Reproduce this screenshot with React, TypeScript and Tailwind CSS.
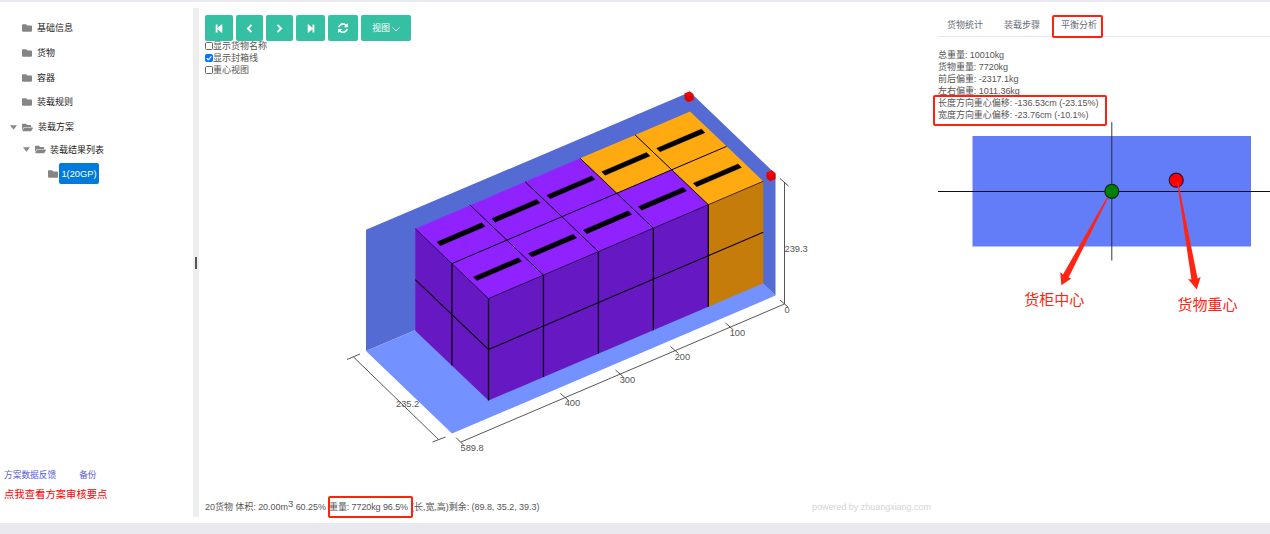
import React from "react";
import { FaFolder, FaFolderOpen } from "react-icons/fa";

type Point = [number, number];

const ORIGIN: Point = [415.3, 228.7];
const LENGTH: Point = [54.95, -23.45];
const WIDTH: Point = [36.6, 34.9];
const BOX_HEIGHT = 51;

const project = (l: number, w: number, down = 0): Point => [
  ORIGIN[0] + l * LENGTH[0] + w * WIDTH[0],
  ORIGIN[1] + l * LENGTH[1] + w * WIDTH[1] + down * BOX_HEIGHT,
];
const pts = (list: Point[]) => list.map((p) => p.join(",")).join(" ");

function Edge({ a, b, w = 1 }: { a: Point; b: Point; w?: number }) {
  return <line x1={a[0]} y1={a[1]} x2={b[0]} y2={b[1]} stroke="#0a0010" strokeWidth={w} />;
}

function Marker({ x, y }: { x: number; y: number }) {
  return (
    <g transform={`translate(${x} ${y})`}>
      <path d="M-4.5-3.5 1-5.5 4.5-2.5V3L-1 5.2-4.5 2Z" fill="#e00000" />
      <path d="M-4.5-3.5 1-5.5 4.5-2.5-1-.3Z" fill="#ff0000" />
    </g>
  );
}

function Scene() {
  const cells = [0, 1].flatMap((w) => [0, 1, 2, 3, 4].map((l) => ({ l, w })));
  return (
    <svg viewBox="205 78 722 416" className="block h-[416px] w-[722px]" fontFamily="Liberation Sans, Arial, sans-serif" fontSize="9.3" fill="#555">
      <polygon points="366,229.8 690,92 775.5,174 775.5,295.5 690,214 366,351" fill="#546bd3" />
      <polygon points="366,351 690,213.5 775.5,295.5 452,433.6" fill="#7391ff" />
      <polygon points={pts([project(0, 0), project(0, 2), project(0, 2, 2), project(0, 0, 2)])} fill="#6619c2" />
      <polygon points={pts([project(0, 2), project(4, 2), project(4, 2, 2), project(0, 2, 2)])} fill="#6619c2" />
      <polygon points={pts([project(4, 2), project(5, 2), project(5, 2, 2), project(4, 2, 2)])} fill="#c67c0a" />
      {cells.map(({ l, w }) => {
        const [cx, cy] = project(l + 0.5, w + 0.5);
        const orange = l === 4 || (l === 3 && w === 0);
        return (
          <g key={`${l}-${w}`}>
            <polygon
              points={pts([project(l, w), project(l + 1, w), project(l + 1, w + 1), project(l, w + 1)])}
              fill={orange ? "#ffaa10" : "#8f22ff"}
            />
            <polygon
              points={pts([[cx - 24.2, cy + 7.6], [cx + 20.6, cy - 11.6], [cx + 24, cy - 8], [cx - 20.8, cy + 11.2]])}
              fill="#000"
              stroke="#000"
              strokeWidth="0.4"
            />
          </g>
        );
      })}
      <Edge a={project(0, 0)} b={project(0, 2)} w={0.7} />
      {[1, 2, 3, 4].map((l) => <Edge key={l} a={project(l, 0)} b={project(l, 2)} />)}
      <Edge a={project(0, 1)} b={project(5, 1)} />
      <Edge a={project(0, 2)} b={project(5, 2)} w={0.7} />
      <Edge a={project(0, 0, 1)} b={project(0, 2, 1)} w={1.1} />
      <Edge a={project(0, 2, 1)} b={project(5, 2, 1)} w={1.1} />
      <Edge a={project(0, 1)} b={project(0, 1, 2)} w={1.3} />
      {[0, 1, 2, 3, 4].map((l) => <Edge key={l} a={project(l, 2)} b={project(l, 2, 2)} w={1.3} />)}
      <Marker x={689} y={97} />
      <Marker x={771} y={176} />
      <g stroke="#444" strokeWidth="0.9" fill="none">
        <path d="M784.5 182V304L461 442M353.5 357 438.5 439.5M347 359.5 360 354M432.5 442 445.5 437" />
        <path d="M780 178.5 788.5 186M780 300 788 307M725.5 323 733.5 330M670.5 346.5 678.5 353.5M615.5 370 623.5 377M560.5 393.5 568.5 400.5M456 437.5 464.5 446" />
      </g>
      <text x="784.5" y="252">239.3</text>
      <text x="784.5" y="312.5">0</text>
      <text x="729.7" y="336">100</text>
      <text x="674.7" y="359.5">200</text>
      <text x="619.7" y="382.8">300</text>
      <text x="564.7" y="406">400</text>
      <text x="460.5" y="451">589.8</text>
      <text x="396" y="407">235.2</text>
    </svg>
  );
}

function BalanceChart() {
  return (
    <svg viewBox="938 122 332 200" className="block h-[200px] w-[332px]" fontFamily="Noto Sans CJK SC, sans-serif" fontSize="15">
      <rect x="972.5" y="136" width="278.5" height="110.5" fill="#637df9" />
      <path d="M938 191.5H1270" stroke="#111" />
      <path d="M1111.8 122V260.5" stroke="#222" strokeWidth="0.9" />
      <circle cx="1111.8" cy="191.3" r="7" fill="#008000" stroke="#102a20" strokeWidth="1.2" />
      <circle cx="1176.2" cy="180.2" r="7" fill="#ff0000" stroke="#301030" strokeWidth="1.2" />
      <g fill="#ff2512">
        <path d="M1107.2 197 1108.3 197.4 1068.6 277.6 1071.3 278.6 1061.3 285.3 1060.3 272.2 1063 274.6Z" />
        <path d="M1177 182 1178.2 182 1197.6 278.5 1200.7 277.1 1196.8 289.5 1188 279 1191.4 279.5Z" />
        <text x="1024.3" y="304.8">货柜中心</text>
        <text x="1177.6" y="310.3">货物重心</text>
      </g>
    </svg>
  );
}

function StepIcon({ flip = false }: { flip?: boolean }) {
  return (
    <svg viewBox="0 0 8 9" className={`h-[9px] w-2 ${flip ? "-scale-x-100" : ""}`} fill="currentColor">
      <path d="M.7.4H2.5V4L6.700.3Q7.300 0 7.300.8V8.200Q7.300 9 6.700 8.700L2.500 5V8.600H.7Z" />
    </svg>
  );
}

function ChevronIcon({ flip = false }: { flip?: boolean }) {
  return (
    <svg viewBox="0 0 7 9" className={`h-[9px] w-[7px] ${flip ? "-scale-x-100" : ""}`} fill="none" stroke="currentColor" strokeWidth="1.9">
      <path d="M5.500.9 1.900 4.500 5.500 8.100" />
    </svg>
  );
}

function RefreshIcon() {
  return (
    <svg viewBox="0 0 1536 1664" className="h-[11px] w-[10px]" fill="currentColor">
      <path d="M1511 928q0 5-1 7-64 268-268 434.500t-478 166.500q-146 0-282.500-55t-243.500-157l-129 129q-19 19-45 19t-45-19-19-45v-448q0-26 19-45t45-19h448q26 0 45 19t19 45-19 45l-137 137q71 66 161 102t187 36q134 0 250-65t186-179q11-17 53-117 8-23 30-23h192q13 0 22.500 9.500t9.500 22.500zm25-800v448q0 26-19 45t-45 19h-448q-26 0-45-19t-19-45 19-45l138-138q-148-137-349-137-134 0-250 65t-186 179q-11 17-53 117-8 23-30 23h-199q-13 0-22.500-9.500t-9.500-22.500v-7q65-268 270-434.500t480-166.500q146 0 284 55.500t245 156.500l130-129q19-19 45-19t45 19 19 45z" />
    </svg>
  );
}

function Caret() {
  return (
    <svg viewBox="0 0 8 5" className="h-[5px] w-[7px]" fill="#888">
      <path d="M0 0H8L4 5Z" />
    </svg>
  );
}

function Check({ label, on = false }: { label: string; on?: boolean }) {
  return (
    <div className="flex h-3 items-center">
      <svg viewBox="0 0 8 8" className="h-2 w-2">
        <rect x="0.5" y="0.5" width="7" height="7" rx="1" fill={on ? "#0075ff" : "#fff"} stroke={on ? "#0075ff" : "#666"} />
        {on && <path d="M1.700 4.200 3.300 5.800 6.400 2.300" fill="none" stroke="#fff" strokeWidth="1.2" />}
      </svg>
      {label}
    </div>
  );
}

function ToolButton({ className, children }: { className: string; children: React.ReactNode }) {
  return (
    <button className={`flex h-[26px] items-center justify-center rounded-[2px] bg-[#35bfa3] text-white ${className}`}>
      {children}
    </button>
  );
}

export default function App() {
  return (
    <div className="relative flex h-[534px] w-[1270px] flex-col overflow-hidden bg-white font-['Liberation_Sans','Noto_Sans_CJK_SC',sans-serif] text-[9px] leading-3 text-[#555]">
      <div className="h-0.5 shrink-0 bg-[#e9e9ef]" />
      <div className="flex h-[521px] shrink-0">
        <aside className="flex w-[193px] flex-col whitespace-nowrap text-[#222]">
          <div className="flex h-[150px] flex-col pt-[14px]">
            {["基础信息", "货物", "容器", "装载规则"].map((t) => (
              <div key={t} className="flex h-[24.7px] items-center gap-[5px] pl-[22px]">
                <FaFolder size={10} color="#858585" />
                {t}
              </div>
            ))}
            <div className="flex h-[24.7px] items-center pl-[10px]">
              <Caret />
              <FaFolderOpen size={11} color="#858585" className="ml-[5px] mr-[5px]" />
              装载方案
            </div>
          </div>
          <div className="-mt-[14px] flex h-[23px] items-center pl-[23px]">
            <Caret />
            <FaFolderOpen size={11} color="#858585" className="ml-[5px] mr-[4px]" />
            装载结果列表
          </div>
          <div className="flex h-[25px] items-center pl-12">
            <FaFolder size={10} color="#858585" />
            <span className="ml-px flex h-[21px] w-10 items-center justify-center rounded-[2px] bg-[#007bdc] text-[9.3px] text-white">1(20GP)</span>
          </div>
          <div className="mt-auto flex h-3 items-center gap-[23px] pl-1 text-[8.7px] text-[#555cd5]">
            <span>方案数据反馈</span>
            <span>备份</span>
          </div>
          <div className="mb-[22px] mt-2 pl-1 text-[10.35px] text-[#ff0000]">点我查看方案审核要点</div>
        </aside>
        <div className="mt-1.5 flex h-[509px] w-[5.5px] items-center justify-center bg-[#eeeeee]">
          <div className="h-3 w-0.5 border-x border-[#555]" />
        </div>
        <main className="flex w-[739.5px] flex-col pl-[6.5px] pt-[13px]">
          <div className="flex gap-[3px]">
            <ToolButton className="w-7"><StepIcon /></ToolButton>
            <ToolButton className="w-[27px]"><ChevronIcon /></ToolButton>
            <ToolButton className="w-[27px]"><ChevronIcon flip /></ToolButton>
            <ToolButton className="w-[29px]"><StepIcon flip /></ToolButton>
            <ToolButton className="w-[30px]"><RefreshIcon /></ToolButton>
            <ToolButton className="w-[50px] gap-[2px]">
              视图
              <svg viewBox="0 0 8 5" className="mt-0.5 h-[5px] w-2" fill="none" stroke="currentColor" strokeWidth="0.9"><path d="M.5.5 4 4 7.500.5" /></svg>
            </ToolButton>
          </div>
          <div className="-mt-px">
            <Check label="显示货物名称" />
            <Check label="显示封箱线" on />
            <Check label="重心视图" />
          </div>
          <div className="mt-0.5 h-[416px] shrink-0">
            <Scene />
          </div>
          <div className="mt-[7px] flex h-3 items-center whitespace-nowrap">
            <span className="w-[124px] tracking-[-0.04px]">20货物 体积: 20.00m<span className="relative -top-[3px] text-[9.5px]">3</span> 60.25%</span>
            <span className="w-[82px] tracking-[-0.1px]">重量: 7720kg 96.5%</span>
            <span className="tracking-[-0.04px]">(长,宽,高)剩余: (89.8, 35.2, 39.3)</span>
            <span className="ml-auto mr-[7px] text-[9px] tracking-[-0.02px] text-[#d4d4d4]">powered by zhuangxiang.com</span>
          </div>
        </main>
        <section className="flex w-[332px] flex-col">
          <nav className="flex h-[35px] items-center gap-[21px] border-b border-[#e4e7ed] pl-[9px] pt-[11px] text-[#666b75]">
            <span>货物统计</span>
            <span>装载步骤</span>
            <span>平衡分析</span>
          </nav>
          <div className="mt-3 h-[73px] tracking-[-0.04px]">
            <p>总重量: 10010kg</p>
            <p>货物重量: 7720kg</p>
            <p>前后偏重: -2317.1kg</p>
            <p>左右偏重: 1011.36kg</p>
            <p>长度方向重心偏移: -136.53cm (-23.15%)</p>
            <p>宽度方向重心偏移: -23.76cm (-10.1%)</p>
          </div>
          <BalanceChart />
        </section>
      </div>
      <div className="h-[11px] shrink-0 bg-[#e9e9ef]" />
      <div className="absolute left-[1052px] top-[15px] h-[23px] w-[51px] rounded-[2px] border-2 border-[#ff2010]" />
      <div className="absolute left-[933px] top-[95px] h-[31px] w-[174px] rounded-[2px] border-2 border-[#ff2010]" />
      <div className="absolute left-[328px] top-[496px] h-[22px] w-[85px] rounded-[2px] border-2 border-[#ff2010]" />
    </div>
  );
}
